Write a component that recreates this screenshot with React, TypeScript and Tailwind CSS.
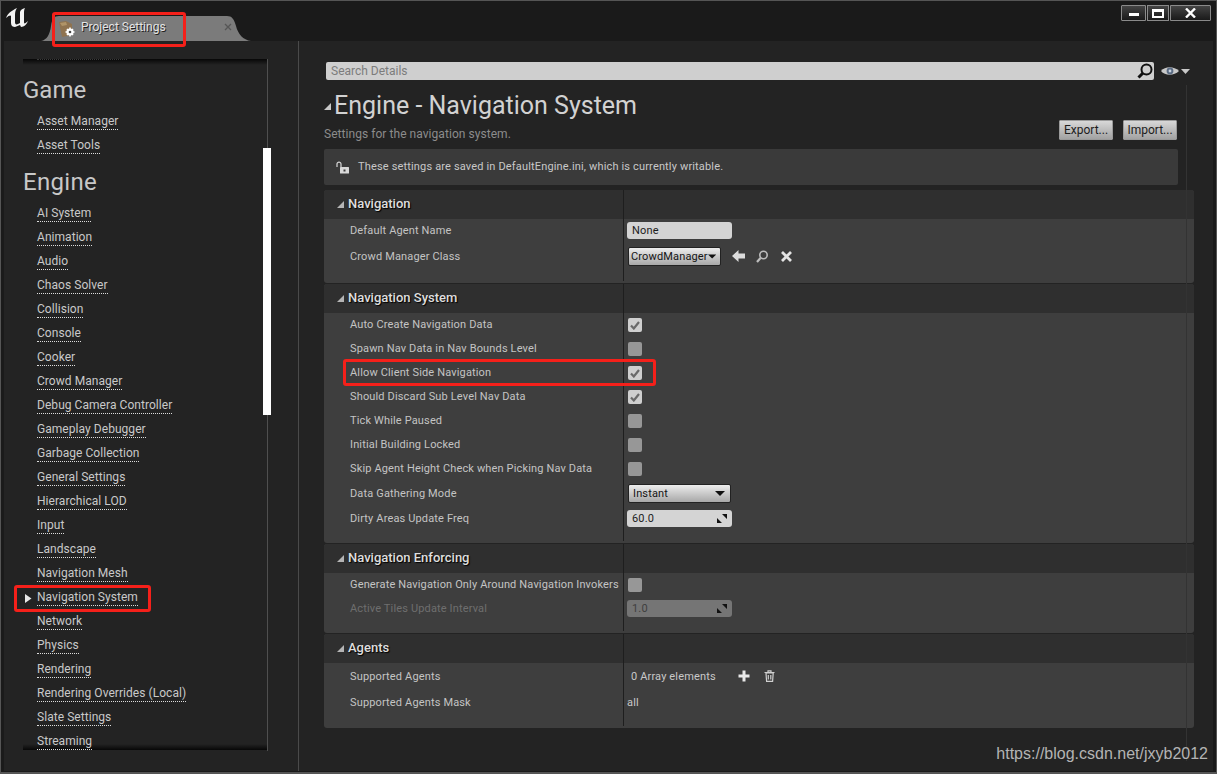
import React from 'react';

const font = { fontFamily: 'Roboto, sans-serif' };

const gameItems = ['Asset Manager', 'Asset Tools'];
const engineItems = [
  'AI System', 'Animation', 'Audio', 'Chaos Solver', 'Collision', 'Console', 'Cooker', 'Crowd Manager',
  'Debug Camera Controller', 'Gameplay Debugger', 'Garbage Collection', 'General Settings', 'Hierarchical LOD',
  'Input', 'Landscape', 'Navigation Mesh', 'Navigation System', 'Network', 'Physics', 'Rendering',
  'Rendering Overrides (Local)', 'Slate Settings', 'Streaming',
];

const Logo = () => (
  <svg width="22" height="19" viewBox="0 0 22 19" className="ml-[6px] mt-[8px] shrink-0">
    <path fill="#f4f4f4" d="M0 10 C2 5 5 3 11 0 C9 3 9 5 9 8 L9 14 C9 16 10 17 12 16 L14 15 L14 5 C14 3 15 1 19 0 C18 2 18 3 18 6 L18 14 C18 16 19 16 22 13 C21 16 18 19 15 19 L14 17 L9 19 C7 19 5 18 5 15 L5 8 C5 7 3 7 0 10 Z" />
  </svg>
);

const TabIcon = () => (
  <svg width="18" height="18" viewBox="0 0 18 18" className="shrink-0">
    <path fill="#8f7350" d="M1 2 L8 1 L14 4 L14 15 L4 17 Z" />
    <path fill="#b09468" d="M2 3 L8 2 L9 5 L4 6 Z" />
    <circle cx="12" cy="12" r="3.6" fill="#fff" />
    <path stroke="#fff" strokeWidth="1.6" d="M12 7.5V16.5M7.5 12H16.5M9 9L15 15M15 9L9 15" />
    <circle cx="12" cy="12" r="1.3" fill="#444" />
  </svg>
);

const Tab = () => (
  <div className="relative ml-[13px] mt-[16px] flex h-[25px] w-[210px] items-center pl-[17px] pr-[19px]">
    <svg width="210" height="25" viewBox="0 0 210 25" className="absolute left-0 top-0">
      <path fill="#7b7b7b" d="M0 25 C6 24 9 18 10 10 C11 3 13 0 18 0 L186 0 C191 0 193 3 195 10 C197 18 202 24 210 25 Z" />
    </svg>
    <span className="relative"><TabIcon /></span>
    <span className="relative mb-[3px] ml-[5px] text-[12px] leading-none text-[#e4e4e4] [text-shadow:1px_1px_0_#222]">Project Settings</span>
    <svg width="8" height="8" viewBox="0 0 8 8" className="relative mb-[3px] ml-auto">
      <path stroke="#565656" strokeWidth="1.3" d="M1 1L7 7M7 1L1 7" />
    </svg>
  </div>
);

const WindowButtons = () => (
  <div className="ml-auto mr-[6px] mt-[5px] flex h-[16px] gap-px">
    <div className="flex w-[25px] items-center justify-center rounded-l-[1px] border border-[#8a8a8a] bg-gradient-to-b from-[#444] to-[#1a1a1a]">
      <div className="mt-[2px] h-[3px] w-[10px] bg-white" />
    </div>
    <div className="flex w-[22px] items-center justify-center border border-[#8a8a8a] bg-gradient-to-b from-[#444] to-[#1a1a1a]">
      <div className="h-[9px] w-[12px] border-[2px] border-t-[3px] border-white" />
    </div>
    <div className="flex w-[41px] items-center justify-center rounded-r-[1px] border border-[#8a8a8a] bg-gradient-to-b from-[#444] to-[#1a1a1a]">
      <svg width="11" height="10" viewBox="0 0 11 10"><path stroke="#fff" strokeWidth="2.4" d="M1 0.5L10 9.5M10 0.5L1 9.5" /></svg>
    </div>
  </div>
);

const NavLink = ({ label }: { label: string }) => (
  <div className="relative flex h-[24px] items-start pl-[14px]">
    {label === 'Navigation System' && (
      <svg width="7" height="9" viewBox="0 0 7 9" className="absolute left-[2px] top-[7px]"><path fill="#e8e8e8" d="M0 0L6.5 4.5L0 9Z" /></svg>
    )}
    <span className="mt-[3px] border-b border-dotted border-[#ddd] text-[12px] leading-[15px] tracking-[0.05px] text-[#c9c9c9]">{label}</span>
  </div>
);

const Sidebar = () => (
  <aside className="relative w-[295px] shrink-0 border-r border-[#4a4a4a]">
    <div className="relative ml-[19px] mt-[18px] h-[691px] w-[244px] overflow-hidden">
      <div className="absolute left-0 right-0 top-0 h-[6px] bg-gradient-to-b from-black/80 to-transparent" />
      <div className="absolute bottom-0 left-0 right-0 h-[6px] bg-gradient-to-t from-black/80 to-transparent" />
      <div className="ml-[14px] h-px w-[90px] border-t border-dotted border-[#ddd]" />
      <h2 className="mt-[16px] h-[28px] text-[24px] leading-[28px] text-[#c8c8c8]">Game</h2>
      <div className="mt-[7px]">
        {gameItems.map((item) => <NavLink key={item} label={item} />)}
      </div>
      <h2 className="mt-[9px] h-[28px] text-[24px] leading-[28px] tracking-[0.3px] text-[#c8c8c8]">Engine</h2>
      <div className="mt-[7px]">
        {engineItems.map((item) => <NavLink key={item} label={item} />)}
      </div>
    </div>
    <div className="absolute bottom-[20px] left-[263px] top-[18px] w-px bg-[#4f4f4f]" />
    <div className="absolute left-[259px] top-[107px] h-[267px] w-[8px] bg-white" />
  </aside>
);

const Check = ({ on }: { on?: boolean }) => (
  <div className={`ml-[5px] flex h-[14px] w-[14px] items-center justify-center rounded-[2px] ${on ? 'bg-[#cfcfcf]' : 'bg-[#979797]'}`}>
    {on && (
      <svg width="10" height="9" viewBox="0 0 10 9"><path fill="none" stroke="#6a6a6a" strokeWidth="2.2" d="M1 4.5L3.8 7.5L9 1" /></svg>
    )}
  </div>
);

const Spin = ({ value, off }: { value: string; off?: boolean }) => (
  <div className={`ml-[4px] flex h-[17px] w-[105px] items-center justify-between rounded-[3px] pl-[5px] pr-[5px] text-[11px] tracking-[0.15px] ${off ? 'bg-[#757575] text-[#3f3f3f]' : 'bg-[#d4d4d4] text-[#1c1c1c]'}`}>
    <span className="pt-[2px]">{value}</span>
    <svg width="10" height="9" viewBox="0 0 10 9"><path fill="#111" d="M5 0H10V5ZM0 4L5 9H0Z" /></svg>
  </div>
);

const DropDown = ({ value, w, arrow }: { value: string; w: string; arrow: string }) => (
  <div className={`flex h-[19px] items-center justify-between rounded-[2px] border border-[#222] bg-gradient-to-b from-[#ededed] to-[#a8a8a8] text-[11px] tracking-[0.15px] text-[#151515] ${w} ${arrow}`}>
    <span className="pt-[2px]">{value}</span>
    <svg width="10" height="5" viewBox="0 0 10 5"><path fill="#111" d="M0 0H10L5 5Z" /></svg>
  </div>
);

// low pushes a label down one pixel where the row height rounds it up
type Row = { label: string; h: string; value?: React.ReactNode; dim?: boolean; low?: boolean };
type Section = { title: string; rows: Row[]; pb: string };

const sections: Section[] = [
  {
    title: 'Navigation',
    pb: 'pb-[12px]',
    rows: [
      { label: 'Default Agent Name', h: 'h-[22px]', low: true, value: <div className="ml-[4px] flex h-[17px] w-[105px] items-center rounded-[3px] bg-[#d4d4d4] pl-[5px] pt-[2px] text-[11px] tracking-[0.15px] text-[#1c1c1c]">None</div> },
      {
        label: 'Crowd Manager Class',
        h: 'h-[30px]',
        low: true,
        value: (
          <div className="ml-[5px] flex items-center">
            <DropDown value="CrowdManager" w="w-[93px]" arrow="pl-[2px] pr-[4px]" />
            <svg width="13" height="12" viewBox="0 0 13 12" className="ml-[11px]"><path fill="#dcdcdc" d="M0 6L6.5 0V3.5H13V8.5H6.5V12Z" /></svg>
            <svg width="12" height="13" viewBox="0 0 12 13" className="ml-[11px]"><circle cx="7.5" cy="5" r="3.7" fill="none" stroke="#bdbdbd" strokeWidth="1.6" /><path stroke="#bdbdbd" strokeWidth="2.2" d="M4.5 8L1 12" /></svg>
            <svg width="11" height="11" viewBox="0 0 11 11" className="ml-[13px]"><path stroke="#e4e4e4" strokeWidth="2.8" d="M1 1L10 10M10 1L1 10" /></svg>
          </div>
        ),
      },
    ],
  },
  {
    title: 'Navigation System',
    pb: 'pb-[12px]',
    rows: [
      { label: 'Auto Create Navigation Data', h: 'h-[24px]', value: <Check on /> },
      { label: 'Spawn Nav Data in Nav Bounds Level', h: 'h-[24px]', value: <Check /> },
      { label: 'Allow Client Side Navigation', h: 'h-[24px]', value: <Check on /> },
      { label: 'Should Discard Sub Level Nav Data', h: 'h-[24px]', value: <Check on /> },
      { label: 'Tick While Paused', h: 'h-[24px]', value: <Check /> },
      { label: 'Initial Building Locked', h: 'h-[24px]', value: <Check /> },
      { label: 'Skip Agent Height Check when Picking Nav Data', h: 'h-[24px]', value: <Check /> },
      { label: 'Data Gathering Mode', h: 'h-[25px]', low: true, value: <div className="ml-[5px]"><DropDown value="Instant" w="w-[103px]" arrow="pl-[4px] pr-[5px]" /></div> },
      { label: 'Dirty Areas Update Freq', h: 'h-[25px]', low: true, value: <Spin value="60.0" /> },
    ],
  },
  {
    title: 'Navigation Enforcing',
    pb: 'pb-[13px]',
    rows: [
      { label: 'Generate Navigation Only Around Navigation Invokers', h: 'h-[24px]', value: <Check /> },
      { label: 'Active Tiles Update Interval', h: 'h-[23px]', dim: true, low: true, value: <Spin value="1.0" off /> },
    ],
  },
  {
    title: 'Agents',
    pb: 'pb-[13px]',
    rows: [
      {
        label: 'Supported Agents',
        h: 'h-[26px]',
        low: true,
        value: (
          <div className="flex items-center pl-[8px] text-[11px] tracking-[0.15px] text-[#c8c8c8]">
            <span className="pt-[2px]">0 Array elements</span>
            <svg width="12" height="12" viewBox="0 0 12 12" className="ml-[22px]"><path stroke="#e8e8e8" strokeWidth="3" d="M6 0.5V11.5M0.5 6H11.5" /></svg>
            <svg width="11" height="12" viewBox="0 0 11 12" className="ml-[14px]"><path fill="none" stroke="#d0d0d0" strokeWidth="1.2" d="M2 3H9.2L8.6 11.4H2.6ZM0.5 2.5H10.5M4 2.5V0.8H7V2.5M4.3 5V9.5M6.8 5V9.5" /></svg>
          </div>
        ),
      },
      { label: 'Supported Agents Mask', h: 'h-[26px]', low: true, value: <div className="pl-[4px] pt-[2px] text-[11px] tracking-[0.15px] text-[#c8c8c8]">all</div> },
    ],
  },
];

const DetailSection = ({ section }: { section: Section }) => (
  <section className={`relative overflow-hidden rounded-[3px] bg-[#3e3e3e] ${section.pb}`}>
    <div className="flex h-[29px] items-center bg-[#2f2f2f] pb-[2px] pl-[13px]">
      <svg width="7" height="7" viewBox="0 0 7 7" className="mt-[2px]"><path fill="#b5b5b5" d="M7 0V7H0Z" /></svg>
      <span className="ml-[4px] text-[13px] font-medium text-[#dedede] [text-shadow:1px_1px_1px_#000]">{section.title}</span>
    </div>
    {section.rows.map((row) => (
      <div key={row.label} className={`flex items-center ${row.h}`}>
        <div className={`w-[299px] shrink-0 whitespace-nowrap pl-[26px] text-[11px] tracking-[0.15px] ${row.low ? 'pt-[2px]' : ''} ${row.dim ? 'text-[#6e6e6e]' : 'text-[#c4c4c4]'}`}>{row.label}</div>
        <div className="flex-1">{row.value}</div>
      </div>
    ))}
    <div className="absolute bottom-[2px] left-[299px] top-0 w-px bg-[#1e1e1e]" />
  </section>
);

const Details = () => (
  <main className="relative min-w-0 flex-1 pl-[25px] pr-[18px]">
    <div className="ml-[2px] mt-[21px] flex h-[18px] items-center">
      <div className="flex h-[18px] w-[828px] items-center justify-between rounded-[2px] bg-[#cfcfcf] pl-[5px] pr-[1px] text-[12px] text-[#7c7c7c]">
        <span>Search Details</span>
        <svg width="16" height="16" viewBox="0 0 16 16"><circle cx="9.5" cy="6.5" r="5" fill="none" stroke="#111" strokeWidth="2" /><path stroke="#111" strokeWidth="3" d="M6 10L1.5 14.5" /></svg>
      </div>
      <svg width="18" height="10" viewBox="0 0 18 10" className="ml-[7px]"><path fill="#c8c8c8" d="M0 5C4 0 13 0 18 5C13 10 4 10 0 5Z" /><circle cx="9" cy="5" r="3.4" fill="#5b6c84" /><circle cx="9" cy="5" r="1.4" fill="#c8d2e0" /></svg>
      <svg width="9" height="5" viewBox="0 0 9 5" className="ml-[2px]"><path fill="#c8c8c8" d="M0 0H9L4.5 5Z" /></svg>
    </div>
    <div className="flex h-[38px] items-center pt-[14px]">
      <svg width="7" height="7" viewBox="0 0 7 7" className="mt-[1px] shrink-0"><path fill="#c8c8c8" d="M7 0V7H0Z" /></svg>
      <h1 className="ml-[3px] text-[25px] leading-[24px] text-[#d2d2d2]">Engine - Navigation System</h1>
    </div>
    <div className="flex h-[30px] items-start justify-between pr-[18px] text-[12px]">
      <span className="mt-[7px] tracking-[0.05px] text-[#8c8c8c]">Settings for the navigation system.</span>
      <div className="mt-[2px] flex gap-[10px]">
        <div className="flex h-[20px] w-[54px] items-center justify-center rounded-[1px] border border-[#9a9a9a] bg-gradient-to-b from-[#d8d8d8] to-[#a2a2a2] text-[#1c1c1c]">Export...</div>
        <div className="flex h-[20px] w-[54px] items-center justify-center rounded-[1px] border border-[#9a9a9a] bg-gradient-to-b from-[#d8d8d8] to-[#a2a2a2] text-[#1c1c1c]">Import...</div>
      </div>
    </div>
    <div className="mt-[1px] flex h-[36px] w-[854px] items-center rounded-[2px] bg-[#3a3a3a] pl-[12px] text-[11px] tracking-[0.16px] text-[#c8c8c8]">
      <svg width="14" height="13" viewBox="0 0 14 13"><path fill="none" stroke="#d8d8d8" strokeWidth="1.2" d="M1 6V3C1 0.5 5 0.5 5 3V6" /><rect x="4" y="6" width="9" height="6.5" rx="0.5" fill="#d8d8d8" /><rect x="7.5" y="8.5" width="2" height="2" fill="#3a3a3a" /></svg>
      <span className="ml-[8px]">These settings are saved in DefaultEngine.ini, which is currently writable.</span>
    </div>
    <div className="mt-[5px] flex w-[870px] flex-col gap-px">
      {sections.map((section) => <DetailSection key={section.title} section={section} />)}
    </div>
    <div className="absolute bottom-[10px] right-[26px] top-[44px] w-px bg-[#333]" />
    <div className="absolute bottom-[5px] right-[5px] text-[16px] text-[#b4b4b4] [font-family:'Liberation_Sans',sans-serif]">https://blog.csdn.net/jxyb2012</div>
  </main>
);

const RedBox = ({ className }: { className: string }) => (
  <div className={`pointer-events-none absolute rounded-[3px] border-[3px] border-[#f5201a] ${className}`} />
);

export default function App() {
  return (
    <div className="relative flex h-[774px] w-[1217px] flex-col overflow-hidden bg-[#1a1a1a] text-[#c8c8c8]" style={font}>
      <header className="flex h-[41px] shrink-0 items-start">
        <Logo />
        <Tab />
        <WindowButtons />
      </header>
      <div className="mx-[4px] mb-[3px] flex min-h-0 flex-1 bg-[#232323]">
        <Sidebar />
        <Details />
      </div>
      <div className="pointer-events-none absolute inset-0 border-[1px] border-b-[2px] border-[#555]" />
      <RedBox className="left-[52px] top-[12px] h-[35px] w-[134px]" />
      <RedBox className="left-[14px] top-[585px] h-[27px] w-[137px]" />
      <RedBox className="left-[343px] top-[359px] h-[27px] w-[313px]" />
    </div>
  );
}
